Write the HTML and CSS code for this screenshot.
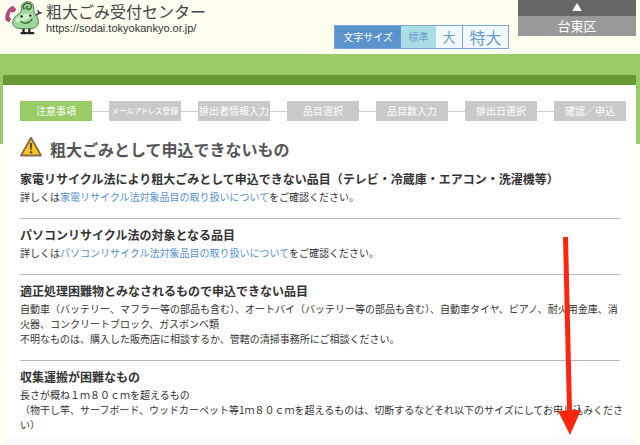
FILE: index.html
```html
<!DOCTYPE html>
<html lang="ja">
<head>
<meta charset="utf-8">
<meta name="viewport" content="width=device-width">
<title>粗大ごみ受付センター</title>
<link rel="stylesheet" href="styles.css">
</head>
<body>
<header class="header">
  <div class="brand">
    <svg class="mascot" viewBox="0 0 38 36" aria-hidden="true">
      <path d="M19 28v5M25 28v5M17 33.500h5M24 33.500h5" stroke="#222" stroke-width="2.400" stroke-linecap="round"/>
      <path d="M31 16l4-3M34 10.500l1 2.500 2-.500" fill="none" stroke="#334" stroke-width="1.600" stroke-linecap="round"/>
      <path d="M17 5c3-5 11-5 12 0 1 4 0 6 2 9 3 4 4 7 3 10-1 5-7 5-13 5S9 29 8 24c-1-6 5-9 8-12 2-2 0-5 1-7z" fill="#9fd69c" stroke="#4f7d4e" stroke-width="1"/>
      <path d="M13 17c4-4 12-5 16-2-2 4-14 8-18 7 0-2 0-4 2-5z" fill="#cdeec6"/>
      <path d="M20 9c-3-3 0-7 4-6 4 0 4 6 0 6-3 0-3-3 0-3" fill="none" stroke="#376536" stroke-width="1.400"/>
      <circle cx="17" cy="16.500" r="1.200" fill="#222"/><circle cx="26" cy="15.500" r="1.200" fill="#222"/>
      <path d="M16 21c3 4 9 3 12-2" fill="none" stroke="#356b35" stroke-width="1.300"/>
      <path d="M1 20c-1-6 2-12 7-14l3 3-2 3-3-1c-2 2-2 4-2 6l2 2-2 3z" fill="#c4487d" stroke="#8b2b59" stroke-width=".800"/>
    </svg>
    <div class="brand-text">
      <p class="brand-name">粗大ごみ受付センター</p>
      <p class="brand-url">https://sodai.tokyokankyo.or.jp/</p>
    </div>
  </div>
  <div class="size-switch" role="group" aria-label="文字サイズ">
    <span class="size-label">文字サイズ</span>
    <button type="button" class="size-normal">標準</button>
    <button type="button" class="size-large">大</button>
    <button type="button" class="size-xlarge">特大</button>
  </div>
  <div class="ward">
    <a class="ward-top" href="#">▲</a>
    <span class="ward-name">台東区</span>
  </div>
</header>
<div class="stage">
  <main class="panel">
    <ol class="steps">
      <li class="step step-current">注意事項</li>
      <li class="step step-long">メールアドレス登録</li>
      <li class="step">排出者情報入力</li>
      <li class="step">品目選択</li>
      <li class="step">品目数入力</li>
      <li class="step">排出日選択</li>
      <li class="step">確認／申込</li>
    </ol>
    <div class="title">
      <svg class="warning" viewBox="0 0 22 20" aria-hidden="true">
        <path d="M11 1.200L21 19H1z" fill="#fbc31c" stroke="#806b4c" stroke-width="1.800" stroke-linejoin="round"/>
        <path d="M9.800 6.500h2.400l-.500 7h-1.400z" fill="#594a32"/><circle cx="11" cy="15.800" r="1.200" fill="#594a32"/>
      </svg>
      <h1>粗大ごみとして申込できないもの</h1>
    </div>
    <section class="item">
      <h2>家電リサイクル法により粗大ごみとして申込できない品目（テレビ・冷蔵庫・エアコン・洗濯機等）</h2>
      <p>詳しくは<a href="#">家電リサイクル法対象品目の取り扱いについて</a>をご確認ください。</p>
    </section>
    <section class="item">
      <h2>パソコンリサイクル法の対象となる品目</h2>
      <p>詳しくは<a href="#">パソコンリサイクル法対象品目の取り扱いについて</a>をご確認ください。</p>
    </section>
    <section class="item">
      <h2>適正処理困難物とみなされるもので申込できない品目</h2>
      <p>自動車（バッテリー、マフラー等の部品も含む）、オートバイ（バッテリー等の部品も含む）、自動車タイヤ、ピアノ、耐火用金庫、消<br>火器、コンクリートブロック、ガスボンベ類<br>不明なものは、購入した販売店に相談するか、管轄の清掃事務所にご相談ください。</p>
    </section>
    <section class="item">
      <h2>収集運搬が困難なもの</h2>
      <p>長さが概ね１ｍ８０ｃｍを超えるもの<br>（物干し竿、サーフボード、ウッドカーペット等1ｍ８０ｃｍを超えるものは、切断するなどそれ以下のサイズにしてお申し込みくださ<br>い）</p>
    </section>
  </main>
</div>
<svg class="arrow" viewBox="0 0 24 198" aria-hidden="true">
  <path d="M5 0h5l4 173h9L12 198 0 174l9-.500z" fill="#fb260d"/>
</svg>
</body>
</html>
```

FILE: styles.css
```css
* {
  box-sizing: border-box;
}

body {
  margin: 0;
  min-height: 100vh;
  display: flex;
  flex-direction: column;
  overflow: hidden;
  background: #fffff0;
  color: #333;
  font-family: "Noto Sans CJK JP", sans-serif;
  font-size: 10px;
  line-height: 15px;
}

h1, h2, p, ol {
  margin: 0;
  padding: 0;
}

a {
  color: #5591cf;
  text-decoration: none;
}

.header {
  display: flex;
  height: 54px;
  padding-right: 4px;
}

.brand {
  display: flex;
  flex: 1;
  gap: 4px;
  padding-left: 5px;
}

.mascot {
  width: 37px;
  height: 36px;
}

.brand-name {
  font-size: 16px;
  line-height: 22px;
  color: #444;
}

.brand-url {
  font-family: "Liberation Sans", sans-serif;
  font-size: 11px;
  line-height: 12px;
}

.size-switch {
  display: flex;
  width: 175px;
  height: 24px;
  margin: 25px 9px 0 0;
  border: 1px solid #7fa6d8;
  background: #f0f9ff;
  line-height: 22px;
}

.size-switch button {
  padding: 0;
  border: 0;
  background: none;
  color: #6a9bcb;
  font: inherit;
}

.size-label {
  width: 66px;
  background: #5a93cd;
  color: #fff;
  text-align: center;
}

.size-switch .size-normal {
  width: 35px;
  background: #a9dee5;
}

.size-switch .size-large {
  width: 27px;
  border-right: 1px solid #7fa6d8;
  font-size: 13px;
}

.size-switch .size-xlarge {
  flex: 1;
  font-size: 16px;
}

.ward {
  width: 118px;
  color: #fff;
  text-align: center;
}

.ward-top {
  display: block;
  height: 16px;
  background: #666;
  color: #fff;
  line-height: 14px;
}

.ward-name {
  display: block;
  height: 20px;
  background: #999;
  font-size: 13px;
  line-height: 20px;
}

.stage {
  flex: 1;
  padding: 21px 4px 0 3px;
  background: linear-gradient(#9c6, #9c6) top / 100% 90px no-repeat;
}

.panel {
  min-height: 100%;
  padding: 16px 10px 0 17px;
  border-top: 10px solid #693;
  background: linear-gradient(to top, #f7f7f7, #fff 12px);
}

.steps {
  display: flex;
  gap: 17px;
  list-style: none;
  background: linear-gradient(#ccc, #ccc) center / 100% 1px no-repeat;
}

.step {
  flex: 1 1 0;
  min-width: 0;
  height: 20px;
  background: #c9c9c9;
  color: #fff;
  line-height: 20px;
  text-align: center;
  white-space: nowrap;
}

.step-current {
  background: #9c6;
}

.step-long {
  font-size: 8px;
  font-feature-settings: "palt";
}

.title {
  display: flex;
  gap: 8px;
  height: 26px;
  margin-top: 15px;
}

.warning {
  width: 22px;
  height: 21px;
}

h1 {
  color: #555;
  font-size: 16px;
  line-height: 26px;
}

.item {
  margin-right: 6px;
  padding: 7px 0 14px;
  border-top: 1px solid #bbb;
}

.title + .item {
  border-top-color: transparent;
}

.item h2 {
  margin-bottom: 1px;
  font-size: 12px;
  line-height: 18px;
  white-space: nowrap;
}

.item p {
  white-space: nowrap;
}

.arrow {
  position: absolute;
  top: 237px;
  left: 558px;
  width: 24px;
  height: 198px;
}
```
